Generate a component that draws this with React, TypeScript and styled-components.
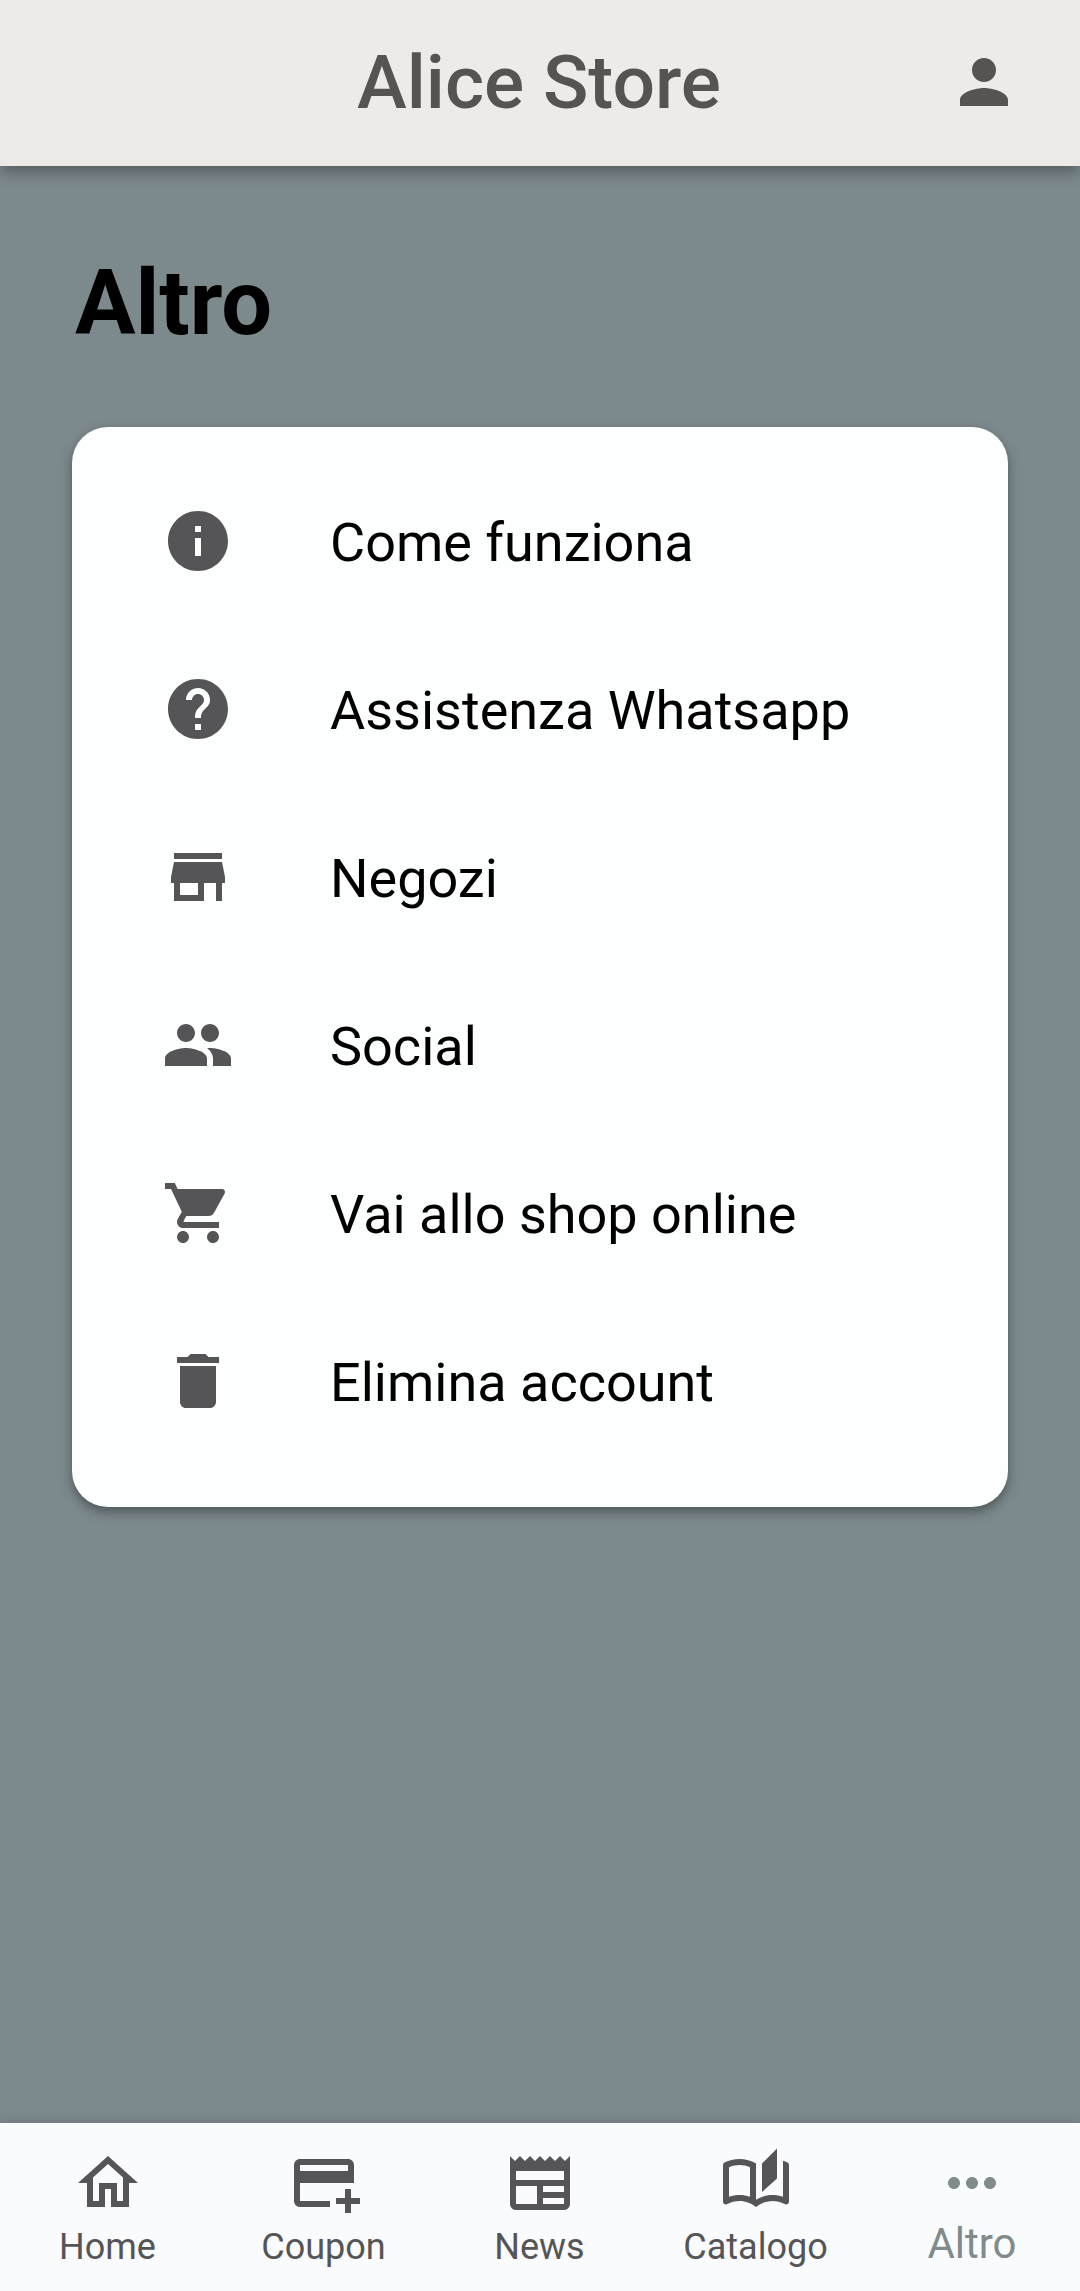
import React from "react";
import styled, { createGlobalStyle } from "styled-components";
import type { IconType } from "react-icons";
import {
  MdPerson, MdInfo, MdHelp, MdStore, MdPeople, MdShoppingCart, MdDelete,
  MdOutlineHome, MdOutlineAddCard, MdOutlineNewspaper, MdOutlineAutoStories, MdMoreHoriz,
} from "react-icons/md";

const GlobalStyle = createGlobalStyle`
  * { box-sizing: border-box; }
  body { margin: 0; font-family: Roboto, "Liberation Sans", sans-serif; }
`;

const Screen = styled.div`
  height: 2291px;
  width: 1080px;
  display: flex;
  flex-direction: column;
  background: #7c898d;
  overflow: hidden;
`;

const AppBar = styled.header`
  height: 166px;
  flex: none;
  display: grid;
  grid-template-columns: 1fr auto 1fr;
  align-items: center;
  padding: 0 60px 2px;
  background: #ecebe8;
  color: #555453;
  box-shadow: 0 6px 12px -3px rgba(0, 0, 0, 0.2), 0 9px 12px rgba(0, 0, 0, 0.1), 0 3px 24px rgba(0, 0, 0, 0.08);
`;

const Brand = styled.div`
  grid-column: 2;
  margin-right: 2px;
  font-size: 75px;
  line-height: 88px;
  font-weight: 500;
`;

const ProfileButton = styled.button`
  justify-self: end;
  display: flex;
  padding: 0;
  border: 0;
  background: none;
  color: inherit;
  font-size: 72px;
`;

const Content = styled.main`
  flex: 1;
  padding: 85px 72px 0;
`;

const Heading = styled.h1`
  margin: 0 0 70px 3px;
  font-size: 90px;
  line-height: 106px;
  font-weight: 700;
  color: #000;
`;

const Card = styled.ul`
  list-style: none;
  margin: 0;
  height: 1080px;
  padding: 30px 90px;
  border-radius: 36px;
  background: #fdfefe;
  box-shadow: 0 5px 8px rgba(0, 0, 0, 0.24), 0 5px 16px rgba(0, 0, 0, 0.14);
`;

const MenuRow = styled.li`
  height: 168px;
  display: flex;
  align-items: center;
  gap: 96px;
  font-size: 54px;
  color: #000;

  svg {
    flex: none;
    width: 72px;
    height: 72px;
    color: #555557;
  }
`;

const MenuLabel = styled.span`
  line-height: 64px;
  padding-top: 4px;
  white-space: nowrap;
`;

const NavBar = styled.nav`
  height: 168px;
  flex: none;
  display: grid;
  grid-template-columns: repeat(5, 1fr);
  background: #fafbfd;
  box-shadow: 0 0 12px rgba(0, 0, 0, 0.16);
`;

const NavItem = styled.a<{ $active?: boolean }>`
  display: flex;
  flex-direction: column;
  align-items: center;
  padding-top: 24px;
  color: ${(p) => (p.$active ? "#808b8b" : "#555557")};

  svg {
    width: 72px;
    height: 72px;
  }
`;

const NavLabel = styled.span<{ $active?: boolean }>`
  margin-top: ${(p) => (p.$active ? "0" : "7px")};
  margin-right: ${(p) => (p.$active ? "0" : "1px")};
  font-size: ${(p) => (p.$active ? "42px" : "36px")};
  line-height: ${(p) => (p.$active ? "50px" : "42px")};
`;

const menu: { label: string; icon: IconType }[] = [
  { label: "Come funziona", icon: MdInfo },
  { label: "Assistenza Whatsapp", icon: MdHelp },
  { label: "Negozi", icon: MdStore },
  { label: "Social", icon: MdPeople },
  { label: "Vai allo shop online", icon: MdShoppingCart },
  { label: "Elimina account", icon: MdDelete },
];

const tabs: { label: string; icon: IconType; active?: boolean }[] = [
  { label: "Home", icon: MdOutlineHome },
  { label: "Coupon", icon: MdOutlineAddCard },
  { label: "News", icon: MdOutlineNewspaper },
  { label: "Catalogo", icon: MdOutlineAutoStories },
  { label: "Altro", icon: MdMoreHoriz, active: true },
];

export default function App() {
  return (
    <>
      <GlobalStyle />
      <Screen>
        <AppBar>
          <Brand>Alice Store</Brand>
          <ProfileButton aria-label="Profilo"><MdPerson /></ProfileButton>
        </AppBar>
        <Content>
          <Heading>Altro</Heading>
          <Card>
            {menu.map(({ label, icon: Icon }) => (
              <MenuRow key={label}>
                <Icon />
                <MenuLabel>{label}</MenuLabel>
              </MenuRow>
            ))}
          </Card>
        </Content>
        <NavBar>
          {tabs.map(({ label, icon: Icon, active }) => (
            <NavItem key={label} $active={active}>
              <Icon />
              <NavLabel $active={active}>{label}</NavLabel>
            </NavItem>
          ))}
        </NavBar>
      </Screen>
    </>
  );
}
